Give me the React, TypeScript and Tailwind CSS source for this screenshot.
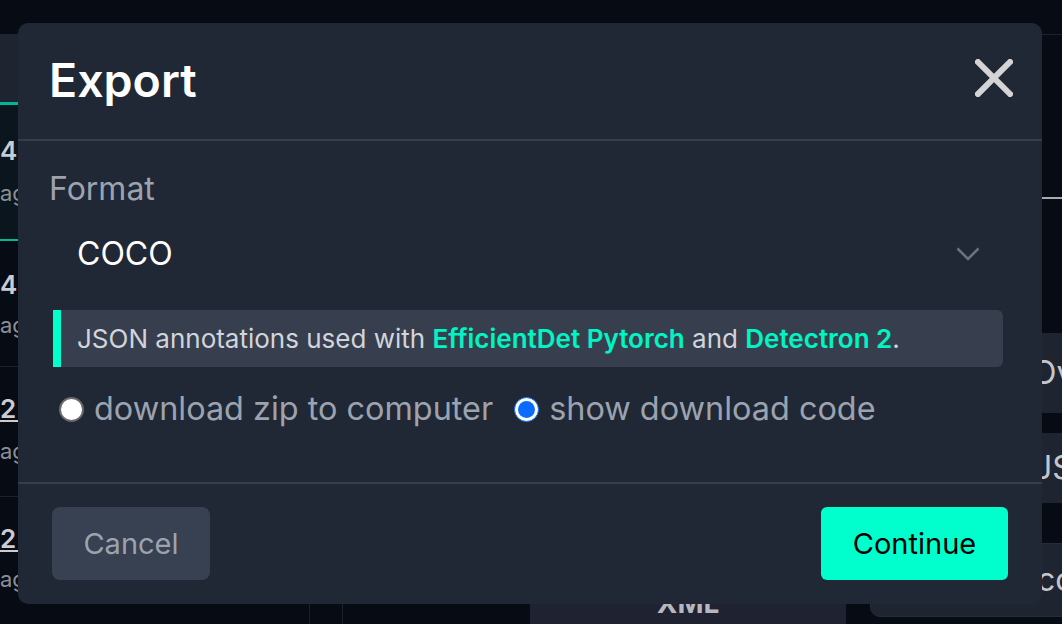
import React from "react";

const font = { fontFamily: "Inter, 'Noto Sans', sans-serif" };

function Background() {
  return (
    <div className="w-[1062px] h-[624px] bg-[#070b14] flex flex-col overflow-hidden">
      <div className="h-[34px] shrink-0 flex">
        <div className="w-[1042px]" />
        <div className="flex-1 mt-[34px] h-px bg-[#1b2230]" />
      </div>
      <div className="flex flex-1 min-h-0">
        {/* left list */}
        <div className="w-[309px] shrink-0 flex flex-col text-[#c9ccd2]">
          <div className="h-[68px] bg-[#1e2430]" />
          <div className="h-[3px] bg-[#00b893]" />
          <div className="h-[134px] bg-[#0b151d] flex flex-col pt-[30px]">
            <span className="text-[26px] leading-[32px] font-semibold">4 1</span>
            <span className="text-[22px] leading-[28px] mt-[12px] text-[#8b9099]">ag</span>
          </div>
          <div className="h-[2px] bg-[#00b893]" />
          <div className="h-[126px] flex flex-col pt-[28px] border-b border-[#1c222c]">
            <span className="text-[26px] leading-[32px] font-semibold">4 1</span>
            <span className="text-[22px] leading-[28px] mt-[10px] text-[#8b9099]">ag</span>
          </div>
          <div className="h-[130px] flex flex-col pt-[26px] border-b border-[#1c222c]">
            <span className="text-[26px] leading-[32px] font-semibold underline">2 1</span>
            <span className="text-[22px] leading-[28px] mt-[12px] text-[#8b9099]">ag</span>
          </div>
          <div className="flex flex-col pt-[26px]">
            <span className="text-[26px] leading-[32px] font-semibold underline">2 9</span>
            <span className="text-[22px] leading-[28px] mt-[10px] text-[#8b9099]">ag</span>
          </div>
        </div>
        <div className="w-[34px] border-l border-r border-[#1c222c] shrink-0" />
        {/* center */}
        <div className="flex-1 flex flex-col justify-end">
          <div className="flex items-end gap-[24px] pl-[187px]">
            <div className="w-[316px] h-[44px] bg-[#1f2230] flex justify-center pt-[2px] text-[28px] font-bold text-[#b6b8bd]">XML</div>
            <div className="flex-1 flex flex-col">
              <div className="h-[80px] bg-[#1e2430] text-[32px] text-[#c4c6cb] flex items-center pl-[162px]">Ov</div>
              <div className="h-[70px] mt-[20px] bg-[#1e2430] text-[32px] text-[#c4c6cb] flex items-center pl-[164px]">JS</div>
              <div className="h-[74px] mt-[40px] mb-[7px] bg-[#1e2430] rounded-l-[10px] border border-[#262d3a] text-[32px] text-[#c4c6cb] flex items-center pl-[166px]">co</div>
            </div>
          </div>
        </div>
      </div>
    </div>
  );
}

function Radio({ checked }: { checked?: boolean }) {
  if (checked) {
    return (
      <span className="w-[25px] h-[25px] rounded-full bg-white border border-[#0a6cff] flex items-center justify-center shrink-0">
        <span className="w-[17px] h-[17px] rounded-full bg-[#0a6cff]" />
      </span>
    );
  }
  return <span className="w-[25px] h-[25px] rounded-full bg-white border-2 border-[#6a6a6a] shrink-0" />;
}

export default function App() {
  return (
    <div className="relative w-[1062px] h-[624px] overflow-hidden" style={font}>
      <div className="absolute right-0 top-[197px] w-[20px] h-[2px] bg-[#a9abb0]" />
      <Background />
      <div className="absolute left-[18px] top-[23px] w-[1024px] bg-[#202835] rounded-[10px] flex flex-col">
        <div className="h-[118px] border-b-2 border-[#363e4b] flex items-center justify-between pl-[31px] pr-[29px]">
          <h1 className="text-[46.5px] font-semibold text-white leading-none -mt-[2px]">Export</h1>
          <svg width="38" height="38" viewBox="0 0 38 38" className="-mt-[6px]">
            <path d="M3 3 L35 35 M35 3 L3 35" stroke="#d4d4d4" strokeWidth="6" strokeLinecap="square" />
          </svg>
        </div>
        <div className="flex flex-col pl-[31px] pr-[38px] pt-[28px] h-[341px]">
          <label className="text-[32px] text-[#9ca3af] leading-[40px]">Format</label>
          <div className="flex items-center justify-between h-[64px] pl-[28px] pr-[24px] mt-[13px]">
            <span className="text-[32px] text-white">COCO</span>
            <svg width="24" height="15" viewBox="0 0 24 15">
              <path d="M1.5 1.5 L12 12 L22.5 1.5" fill="none" stroke="#6b7280" strokeWidth="2.5" />
            </svg>
          </div>
          <div className="ml-[4px] mr-[1px] mt-[24px] h-[57px] shrink-0 bg-[#373f4f] border-l-[8px] border-[#00ffcc] rounded-r-[6px] flex items-center pl-[16px] text-[26px] text-[#d1d5db]">
            <span>
              JSON annotations used with <span className="text-[#00f5c4] font-semibold">EfficientDet Pytorch</span> and{" "}
              <span className="text-[#00f5c4] font-semibold">Detectron 2</span>.
            </span>
          </div>
          <div className="flex items-center mt-[18px] ml-[10px] text-[32.4px] text-[#9ca3af]">
            <Radio />
            <span className="ml-[10px]">download zip to computer</span>
            <span className="ml-[21px] flex items-center">
              <Radio checked />
            </span>
            <span className="ml-[10px]">show download code</span>
          </div>
        </div>
        <div className="border-t-2 border-[#363e4b] flex items-center justify-between px-[34px] pt-[23px] pb-[24px]">
          <button className="w-[158px] h-[73px] rounded-[8px] bg-[#374151] text-[29px] text-[#9ca3af]">Cancel</button>
          <button className="w-[187px] h-[73px] rounded-[6px] bg-[#00ffcc] text-[29px] text-black">Continue</button>
        </div>
      </div>
    </div>
  );
}
